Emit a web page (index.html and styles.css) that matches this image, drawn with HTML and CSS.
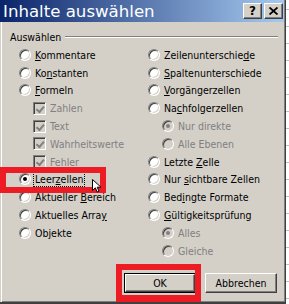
FILE: index.html
```html
<!DOCTYPE html>
<html lang="de">
<head>
  <meta charset="UTF-8" />
  <title>Inhalte auswählen</title>
  <link rel="stylesheet" href="styles.css">
</head>
<body>
  <div class="screen">
    <div class="window">
      <div class="titlebar">
        <span class="title">Inhalte auswählen</span>
        <div class="caption-btns">
          <span class="cbtn help">?</span>
          <span class="cbtn">
            <svg width="9" height="8" viewBox="0 0 9 8"><path d="M0.5 0.5 L8.5 7.5 M8.5 0.5 L0.5 7.5" stroke="#000" stroke-width="1.8"/></svg>
          </span>
        </div>
      </div>

      <div class="client">
        <div class="group">
          <div class="group-head">
            <span class="legend">Auswählen</span>
            <span class="etch"></span>
          </div>
          <div class="cols">
            <div class="col">
              <div class="row"><span class="radio"></span><span><u>K</u>ommentare</span></div>
              <div class="row"><span class="radio"></span><span>Ko<u>n</u>stanten</span></div>
              <div class="row"><span class="radio"></span><span><u>F</u>ormeln</span></div>
              <div class="row sub off"><span class="check"></span><span>Zahlen</span></div>
              <div class="row sub off"><span class="check"></span><span>Text</span></div>
              <div class="row sub off"><span class="check"></span><span>Wahrheitswerte</span></div>
              <div class="row sub off"><span class="check"></span><span>Fehler</span></div>
              <div class="row"><span class="radio on"></span><span class="focus">Leer<u>z</u>ellen</span></div>
              <div class="row"><span class="radio"></span><span>Aktueller <u>B</u>ereich</span></div>
              <div class="row"><span class="radio"></span><span>Aktuelles Arra<u>y</u></span></div>
              <div class="row"><span class="radio"></span><span>Ob<u>j</u>ekte</span></div>
            </div>
            <div class="col">
              <div class="row"><span class="radio"></span><span>Zeilenunterschie<u>d</u>e</span></div>
              <div class="row"><span class="radio"></span><span><u>S</u>paltenunterschiede</span></div>
              <div class="row"><span class="radio"></span><span><u>V</u>orgängerzellen</span></div>
              <div class="row"><span class="radio"></span><span>Na<u>c</u>hfolgerzellen</span></div>
              <div class="row sub off"><span class="radio on"></span><span>Nur direkte</span></div>
              <div class="row sub off"><span class="radio"></span><span>Alle Ebenen</span></div>
              <div class="row"><span class="radio"></span><span>Letzte <u>Z</u>elle</span></div>
              <div class="row"><span class="radio"></span><span>Nur <u>s</u>ichtbare Zellen</span></div>
              <div class="row"><span class="radio"></span><span>Bed<u>i</u>ngte Formate</span></div>
              <div class="row"><span class="radio"></span><span><u>G</u>ültigkeitsprüfung</span></div>
              <div class="row sub off"><span class="radio on"></span><span>Alles</span></div>
              <div class="row sub off"><span class="radio"></span><span>Gleiche</span></div>
            </div>
          </div>
        </div>

        <div class="buttons">
          <span class="btn default"><span class="btn-face">OK</span></span>
          <span class="btn"><span class="btn-face">Abbrechen</span></span>
        </div>
      </div>
    </div>
    <div class="behind"></div>

    <!-- annotations drawn over the dialog -->
    <div class="mark mark-leer"></div>
    <div class="mark mark-ok"></div>
    <svg class="cursor" width="11" height="14" viewBox="0 0 11 14">
      <path d="M0.5 0.5 L0.5 11.5 L3.3 8.8 L5.2 13 L7 12.2 L5.2 8.2 L9 8.2 Z" fill="#fff" stroke="#000" stroke-width="1"/>
    </svg>
  </div>
</body>
</html>
```

FILE: styles.css
```css
* { margin: 0; padding: 0; box-sizing: border-box; }
body {
  font-family: "DejaVu Sans Condensed", "DejaVu Sans", sans-serif;
  font-size: 10.5px;
  color: #000;
  background: #d4d0c8;
}
.screen {
  position: relative;
  width: 289px; height: 304px;
  display: flex;
  overflow: hidden;
}
.window {
  width: 286px; height: 304px;
  display: flex; flex-direction: column;
  background: #d4d0c8;
  border-right: 1px solid #404040;
  border-bottom: 2px solid #404040;
  box-shadow: inset -1px -1px #808080;
}
.behind {
  flex: 1;
  background: repeating-linear-gradient(to bottom, #fff 0 9px, #c0c0c0 9px 10px, #fff 10px 17px);
}

/* title bar */
.titlebar {
  height: 22px;
  margin-right: 1px;
  display: flex; align-items: center; justify-content: space-between;
  background: linear-gradient(to right, #0a246a, #a6caf0);
}
.title {
  font-family: "DejaVu Sans", sans-serif;
  font-size: 16.6px;
  color: #fff;
  padding-left: 3px;
  letter-spacing: 0;
}
.caption-btns { display: flex; gap: 2px; padding-right: 1px; }
.cbtn {
  width: 19px; height: 16px;
  display: flex; align-items: center; justify-content: center;
  background: #d4d0c8;
  border: 1px solid; border-color: #fff #404040 #404040 #fff;
  box-shadow: inset -1px -1px #808080;
}
.cbtn.help {
  font-family: "DejaVu Sans", sans-serif;
  font-weight: bold; font-size: 12px; line-height: 1;
}

/* client area */
.client {
  flex: 1;
  display: flex; flex-direction: column;
  border-left: 1px solid #d4d0c8;
  box-shadow: inset 1px 0 #fff;
  padding-top: 8px;
}
.group-head {
  display: flex; align-items: center; gap: 4px;
  height: 14px;
  padding-left: 9px;
  margin-right: 7px;
}
.etch {
  flex: 1; height: 2px;
  border-top: 1px solid #808080;
  border-bottom: 1px solid #fff;
}
.cols {
  display: grid;
  grid-template-columns: 129px 1fr;
  margin-top: 2px;
  padding-left: 18px;
}
.row {
  height: 17.8px;
  display: flex; align-items: center; gap: 4px;
  white-space: nowrap;
}
.row.sub { padding-left: 14px; }
.row.off { color: #808080; }
.row u { text-decoration: underline; text-underline-offset: 1px; }

.radio {
  position: relative;
  flex: none;
  width: 12px; height: 12px;
  border-radius: 50%;
  background: #fff;
  border: 1px solid; border-color: #808080 #fff #fff #808080;
  box-shadow: inset 1px 1px #404040, inset -1px -1px #d4d0c8;
}
.off .radio { background: #d4d0c8; }
.radio.on::after {
  content: "";
  position: absolute; left: 3px; top: 3px;
  width: 4px; height: 4px; border-radius: 50%;
  background: #000;
}
.off .radio.on::after { background: #808080; }

.check {
  position: relative;
  flex: none;
  width: 13px; height: 13px;
  background: #d4d0c8;
  border: 1px solid; border-color: #808080 #fff #fff #808080;
  box-shadow: inset 1px 1px #404040, inset -1px -1px #d4d0c8;
}
.check::after {
  content: "";
  position: absolute; left: 3px; top: 1px;
  width: 3px; height: 6px;
  border: solid #808080; border-width: 0 2px 2px 0;
  transform: rotate(40deg) translate(1px, 0);
}

.focus {
  outline: 1px dotted #000;
  outline-offset: 0;
  padding: 0 1px;
  margin-left: -1px;
  line-height: 13px;
}

/* buttons */
.buttons {
  margin-top: auto;
  display: flex; justify-content: flex-end; gap: 9px;
  padding: 0 8px 9px 0;
}
.btn {
  width: 72px; height: 20px;
  display: flex;
  border: 1px solid; border-color: #fff #404040 #404040 #fff;
  box-shadow: inset -1px -1px #808080;
}
.btn.default {
  border: 1px solid #000;
  box-shadow: none;
}
.btn-face {
  flex: 1;
  display: flex; align-items: center; justify-content: center;
}
.btn.default .btn-face {
  border: 1px solid; border-color: #fff #404040 #404040 #fff;
  box-shadow: inset -1px -1px #808080;
}

/* annotations */
.mark {
  position: absolute;
  border: 6px solid #ed1c24;
}
.mark-leer { left: 0; top: 167px; width: 106px; height: 26px; }
.mark-ok { left: 116px; top: 264px; width: 85px; height: 38px; border-bottom-width: 7px; }
.cursor { position: absolute; left: 92px; top: 179px; }
```
